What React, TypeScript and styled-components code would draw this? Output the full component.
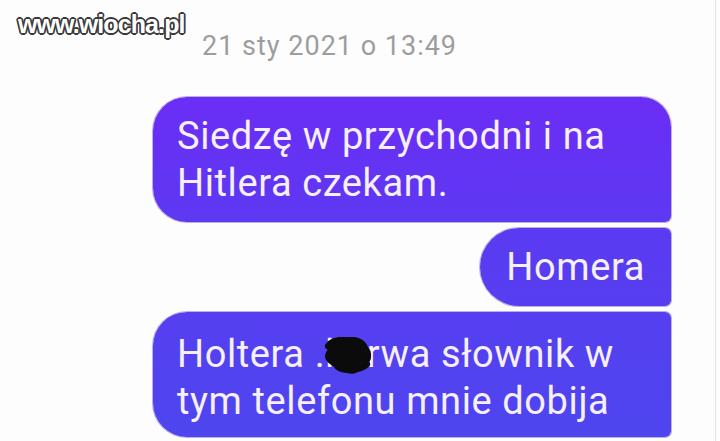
import React from "react";
import styled, { createGlobalStyle } from "styled-components";

const Global = createGlobalStyle`
  html, body { margin: 0; padding: 0; background: #fdfdfd; }
  body { font-family: Roboto, "Noto Sans", sans-serif; overflow: hidden; }
`;

const Screen = styled.div`
  position: relative;
  width: 716px;
  height: 441px;
  border-right: 1px solid #e4e4e4;
  box-sizing: border-box;
  background: #fdfdfd;
  display: flex;
  flex-direction: column;
  overflow: hidden;
`;

const Watermark = styled.div`
  position: absolute;
  top: 12px;
  left: 18px;
  font-family: "Liberation Sans", Arial, sans-serif;
  font-weight: 700;
  font-size: 25px;
  line-height: 1;
  letter-spacing: -0.9px;
  color: #ffffff;
  text-shadow:
    -1.3px -1.3px 0 #3a3a3a, 1.3px -1.3px 0 #3a3a3a, -1.3px 1.3px 0 #3a3a3a, 1.3px 1.3px 0 #3a3a3a,
    0 -1.7px 0 #3a3a3a, 0 1.7px 0 #3a3a3a, -1.7px 0 0 #3a3a3a, 1.7px 0 0 #3a3a3a;
`;

const Timestamp = styled.div`
  padding: 31px 0 0 202px;
  font-size: 27px;
  line-height: 30px;
  letter-spacing: 1px;
  color: #9d9d9d;
`;

const Thread = styled.div`
  display: flex;
  flex-direction: column;
  align-items: flex-end;
  gap: 6px;
  padding: 36px 44px 0 0;
`;

type Shape = "first" | "middle" | "last";

const radii: Record<Shape, string> = {
  first: "34px 30px 6px 34px",
  middle: "40px 6px 6px 40px",
  last: "34px 6px 6px 34px",
};

const Bubble = styled.div<{ $shape: Shape; $wide?: boolean }>`
  box-sizing: border-box;
  width: ${(p) => (p.$wide ? "518px" : "auto")};
  padding: ${(p) =>
    p.$shape === "last" ? "19px 24px 12px 24px" : p.$wide ? "16px 24px 15px 24px" : "16px 26px 15px 26px"};
  border-radius: ${(p) => radii[p.$shape]};
  background: linear-gradient(180deg, #6e2af6 0%, #6a2ef5 25%, #5a3bf1 55%, #4d46ef 100%) fixed;
  box-shadow: 0 0 0 1px rgba(70, 30, 170, 0.35);
  color: #f6effd;
  font-size: 38px;
  line-height: 47px;
  letter-spacing: 0.6px;
  white-space: pre-line;
`;

const Censored = styled.span`
  position: relative;
`;

const Scribble = styled.svg`
  position: absolute;
  left: -3px;
  top: 5px;
  width: 51px;
  height: 37px;
`;

export default function App() {
  return (
    <>
      <Global />
      <Screen>
        <Watermark>www.wiocha.pl</Watermark>
        <Timestamp>21 sty 2021 o 13:49</Timestamp>
        <Thread>
          <Bubble $shape="first" $wide>
            {"Siedzę w przychodni i na\nHitlera czekam."}
          </Bubble>
          <Bubble $shape="middle">Homera</Bubble>
          <Bubble $shape="last" $wide>
            Holtera .
            <Censored>
              ku
              <Scribble viewBox="0 0 51 37" preserveAspectRatio="none">
                <path
                  d="M7 9 C 12 2, 36 1, 41 9 C 45 14, 38 17, 28 18 C 16 19, 12 25, 16 29 C 21 34, 38 33, 44 27"
                  fill="none"
                  stroke="#0b0b0b"
                  strokeWidth="8"
                  strokeLinecap="round"
                  strokeLinejoin="round"
                />
                <ellipse cx="26" cy="19" rx="23" ry="13" fill="#0b0b0b" />
                <rect x="5" y="8" width="44" height="21" rx="9" fill="#0b0b0b" />
                <ellipse cx="30" cy="34" rx="5" ry="2.8" fill="#0b0b0b" />
              </Scribble>
            </Censored>
            {"rwa słownik w\ntym telefonu mnie dobija"}
          </Bubble>
        </Thread>
      </Screen>
    </>
  );
}
